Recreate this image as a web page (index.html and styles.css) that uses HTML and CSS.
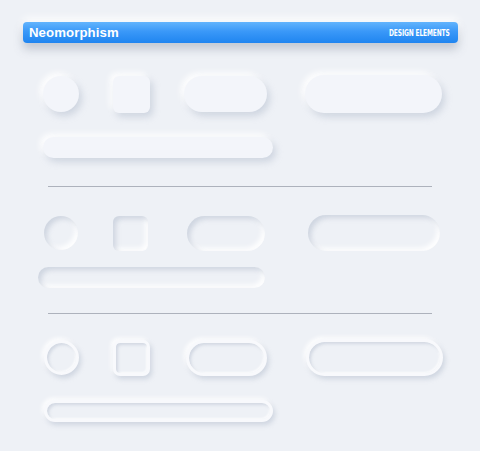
FILE: index.html
```html
<!DOCTYPE html>
<html>
<head>
<meta charset="utf-8">
<link rel="stylesheet" href="styles.css">
</head>
<body>
<div class="page">
  <header class="titlebar">
    <span class="title">Neomorphism</span>
    <span class="subtitle">DESIGN ELEMENTS</span>
  </header>

  <section class="set set-raised">
    <div class="row">
      <div class="shape circle"></div>
      <div class="shape square"></div>
      <div class="shape pill"></div>
      <div class="shape pill-long"></div>
    </div>
    <div class="shape bar"></div>
  </section>

  <hr class="divider">

  <section class="set set-inset">
    <div class="row">
      <div class="shape circle"></div>
      <div class="shape square"></div>
      <div class="shape pill"></div>
      <div class="shape pill-long"></div>
    </div>
    <div class="shape bar"></div>
  </section>

  <hr class="divider">

  <section class="set set-ring">
    <div class="row">
      <div class="shape circle"></div>
      <div class="shape square"></div>
      <div class="shape pill"></div>
      <div class="shape pill-long"></div>
    </div>
    <div class="shape bar"></div>
  </section>
</div>
</body>
</html>
```

FILE: styles.css
```css
* { box-sizing: border-box; }

html, body {
  margin: 0;
  padding: 0;
  background: #eef1f6;
  width: 480px;
  height: 451px;
  overflow: hidden;
  font-family: "Liberation Sans", Arial, sans-serif;
}

.page {
  padding-top: 22px;
  display: flex;
  flex-direction: column;
}

.titlebar {
  margin-left: 23px;
  width: 435px;
  height: 21px;
  border-radius: 4px;
  background: linear-gradient(180deg, #62b4fd 0%, #3a98f8 45%, #1f85f0 100%);
  box-shadow: 0 6px 10px rgba(110, 120, 140, 0.35), 0 -4px 8px rgba(255, 255, 255, 0.9);
  display: flex;
  align-items: center;
  justify-content: space-between;
  padding: 0 8px 0 6px;
}

.title {
  color: #ffffff;
  font-weight: bold;
  font-size: 13.2px;
  letter-spacing: 0.1px;
}

.subtitle {
  color: #ffffff;
  font-family: "DejaVu Sans Condensed", "DejaVu Sans", sans-serif;
  font-weight: bold;
  font-size: 8.5px;
  letter-spacing: -0.2px;
  transform: scaleX(0.78);
  transform-origin: right center;
}

.set {
  display: flex;
  flex-direction: column;
}

.row {
  display: flex;
  align-items: center;
}

.shape {
  flex: none;
  background: #f1f3f8;
}

.circle { border-radius: 50%; }
.square { border-radius: 6px; }
.pill, .pill-long, .bar { border-radius: 999px; }

/* ---------- raised set ---------- */
.set-raised { margin-top: 32px; }
.set-raised .row { padding-left: 43px; height: 38px; }
.set-raised .circle { width: 36px; height: 36px; }
.set-raised .square { width: 37px; height: 37px; margin-left: 34px; }
.set-raised .pill { width: 83px; height: 36px; margin-left: 34px; }
.set-raised .pill-long { width: 137px; height: 38px; margin-left: 38px; }
.set-raised .bar { margin-top: 24px; margin-left: 43px; width: 230px; height: 21px; }
.set-raised .shape {
  background: #f3f5fa;
  box-shadow: 3px 4px 7px rgba(160, 172, 192, 0.4),
              -3px -3px 6px rgba(255, 255, 255, 1);
}

.divider {
  margin: 28px 0 0 48px;
  width: 384px;
  height: 1px;
  border: 0;
  background: #adb2bc;
}

/* ---------- inset set ---------- */
.set-inset { margin-top: 28px; }
.set-inset .row { padding-left: 44px; height: 36px; }
.set-inset .circle { width: 34px; height: 34px; }
.set-inset .square { width: 35px; height: 35px; margin-left: 35px; }
.set-inset .pill { width: 78px; height: 35px; margin-left: 39px; }
.set-inset .pill-long { width: 132px; height: 36px; margin-left: 43px; }
.set-inset .bar { margin-top: 16px; margin-left: 38px; width: 227px; height: 21px; }
.set-inset .shape {
  background: #eef1f6;
  box-shadow: inset 3px 3px 5px rgba(160, 172, 192, 0.4),
              inset -3px -3px 5px rgba(255, 255, 255, 0.95);
}

.set-inset + .divider { margin-top: 25px; }

/* ---------- ring set ---------- */
.set-ring { margin-top: 25px; }
.set-ring .row { padding-left: 44px; height: 37px; }
.set-ring .circle { width: 35px; height: 35px; }
.set-ring .square { width: 37px; height: 36px; margin-left: 34px; border-radius: 7px; }
.set-ring .pill { width: 81px; height: 36px; margin-left: 36px; }
.set-ring .pill-long { width: 137px; height: 37px; margin-left: 39px; }
.set-ring .bar { margin-top: 24px; margin-left: 44px; width: 229px; height: 22px; }
.set-ring .shape {
  background: #eef1f6;
  border: 3px solid #f8f9fc;
  box-shadow: 2px 3px 5px rgba(160, 172, 192, 0.4),
              -2px -2px 4px rgba(255, 255, 255, 0.95),
              inset 2px 2px 3px rgba(160, 172, 192, 0.35),
              inset -1px -1px 2px rgba(255, 255, 255, 0.8);
}
```
